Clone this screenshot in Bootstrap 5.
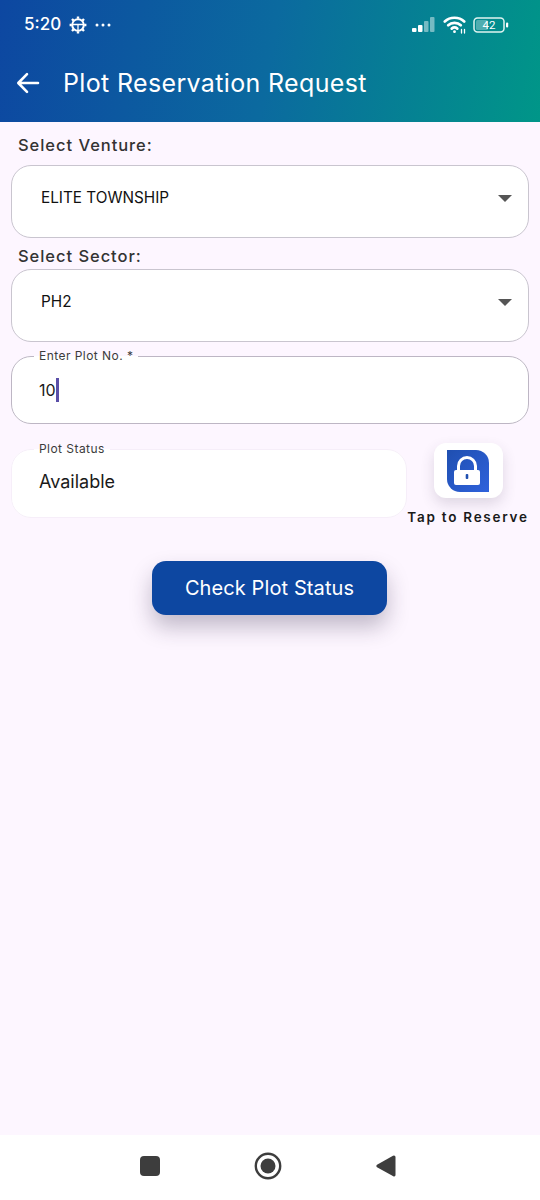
<!DOCTYPE html>
<html lang="en">
<head>
  <meta charset="UTF-8" />
  <meta name="viewport" content="width=device-width, initial-scale=1.0"/>
  <title>Plot Reservation Request</title>
  <link rel="stylesheet" href="https://cdn.jsdelivr.net/npm/bootstrap@5.3.2/dist/css/bootstrap.min.css"/>
  <style>
    body {
      background-color: #fdf6ff;
      font-family: Inter, "Open Sans", sans-serif;
      color: #1a1a1a;
      height: 1200px;
      width: 540px;
      overflow: hidden;
    }
    .app-screen { height: 1200px; }
    .app-header {
      height: 122px;
      background: linear-gradient(100deg, #0d47a1 0%, #0b6a9f 50%, #009688 100%);
      color: #fff;
    }
    .status-row { height: 49px; padding: 0 31px 0 24px; }
    .status-time { font-size: 17px; font-weight: 500; }
    .status-icons { gap: 6px; }
    .title-row { height: 48px; padding-left: 16px; gap: 23px; margin-top: 10px; }
    .title-text { font-size: 25px; letter-spacing: .35px; line-height: 1; margin: 0; font-weight: 400; }
    .form-area { padding: 0 11px; }
    .field-label { font-size: 16.5px; font-weight: 500; letter-spacing: .95px; color: #333; margin: 0 0 0 7px; line-height: 20px; }
    .pick-first { margin-top: 13px; margin-bottom: 10px; }
    .pick-next { margin-top: 8px; margin-bottom: 3px; }
    .pick-box {
      height: 73px; background: #fff; border: 1px solid #c9c5cf; border-radius: 20px;
      padding: 0 16px 6px 29px; font-size: 15.3px; color: #111;
    }
    .pick-arrow { width: 0; height: 0; border-left: 7.5px solid transparent; border-right: 7.5px solid transparent; border-top: 7.5px solid #555; }
    .notch-box { background: #fff; border: 1px solid #bdb6c4; border-radius: 20px; height: 74px; margin: 0; padding: 0 27px; }
    .notch-box legend { float: none; width: auto; font-size: 12px; font-weight: 400; color: #3c3c3c; padding: 0 5px; margin: 0 0 0 -5px; line-height: 1; letter-spacing: .45px; }
    .notch-value { font-size: 16px; line-height: 24px; margin-top: 16px; }
    .type-caret { display: inline-block; width: 3px; height: 24px; background: #5a4fa8; vertical-align: top; }
    .plot-field { margin-top: 8px; }
    .status-line { margin-top: 19px; }
    .status-box { border-color: #f6eef9; width: 396px; height: 75px; flex: none; }
    .status-box .notch-value { font-size: 18px; margin-top: 15px; }
    .reserve-col { width: 122px; }
    .reserve-tile {
      width: 69px; height: 55px; background: #fff; border-radius: 12px;
      box-shadow: 0 6px 14px rgba(60, 50, 80, .16);
    }
    .reserve-text { font-size: 13.5px; font-weight: 600; letter-spacing: 1.75px; margin-top: 11px; line-height: 16px; white-space: nowrap; }
    .check-wrap { margin-top: 36px; padding-right: 1px; }
    .check-btn {
      width: 235px; height: 54px; background: #0d47a1; color: #fff; border: 0; border-radius: 14px;
      font-size: 20px; letter-spacing: .1px; box-shadow: 0 12px 22px rgba(40, 30, 60, .28);
    }
    .check-btn:hover { background: #0d47a1; color: #fff; }
    .bottom-bar { height: 65px; background: #fff; padding: 0 4px 4px 0; }
    .bar-slot { width: 118px; }
  </style>
</head>
<body>
  <div class="app-screen d-flex flex-column">
    <header class="app-header">
      <div class="status-row d-flex align-items-center justify-content-between">
        <div class="d-flex align-items-center gap-2">
          <span class="status-time">5:20</span>
          <svg width="18" height="18" viewBox="0 0 18 18" fill="none" stroke="#fff">
            <circle cx="9" cy="9" r="5.800" stroke-width="2"/>
            <path d="M3.600 8.500h10.800M9 8.500v5.500" stroke-width="1.300"/>
            <path d="M9 .6v2.200M9 15.200v2.200M.6 9h2.200M15.200 9h2.200M3 3l1.600 1.600M13.400 13.400L15 15M15 3l-1.600 1.600M4.600 13.400L3 15" stroke-width="2.400"/>
          </svg>
          <svg width="16" height="4" viewBox="0 0 16 4" fill="#fff">
            <circle cx="2" cy="2" r="1.500"/><circle cx="8" cy="2" r="1.500"/><circle cx="14" cy="2" r="1.500"/>
          </svg>
        </div>
        <div class="status-icons d-flex align-items-center">
          <svg width="25" height="17" viewBox="0 0 25 17">
            <rect x="0" y="12" width="4.500" height="4" rx="1" fill="#fff"/>
            <rect x="6" y="9" width="4.500" height="7" rx="1" fill="#fff"/>
            <rect x="12" y="5" width="4.500" height="11" rx="1" fill="#fff" fill-opacity=".45"/>
            <rect x="18" y="1" width="4.500" height="15" rx="1" fill="#fff" fill-opacity=".45"/>
          </svg>
          <svg width="24" height="19" viewBox="0 0 24 19" fill="none" stroke="#fff" stroke-width="2.700" stroke-linecap="round">
            <path d="M1.800 6.500C7 1.500 16 1.500 21.200 6.500"/>
            <path d="M5.200 10.200C8.500 7 14.500 7 17.800 10.200"/>
            <path d="M8.700 13.600C10.300 12.300 12.700 12.300 14.300 13.600"/>
            <circle cx="11.500" cy="16.700" r=".8" fill="#fff" stroke-width="1.200"/>
            <path d="M18.500 14.500v3.500M21.500 14.500v3.500" stroke-width="1.300"/>
          </svg>
          <svg width="36" height="16" viewBox="0 0 36 16">
            <rect x="1" y="1" width="30" height="14" rx="3.500" fill="none" stroke="#dff3f0" stroke-width="1.500"/>
            <rect x="3" y="3" width="12" height="10" rx="1.500" fill="#fff" fill-opacity=".3"/>
            <rect x="33" y="5.500" width="2.200" height="5" rx="1" fill="#fff"/>
            <text x="16" y="12" text-anchor="middle" font-family="Roboto, sans-serif" font-size="11.500" fill="#fff">42</text>
          </svg>
        </div>
      </div>
      <div class="title-row d-flex align-items-center">
        <svg width="24" height="22" viewBox="0 0 24 22" fill="none" stroke="#fff" stroke-width="2.600" stroke-linecap="round" stroke-linejoin="round">
          <path d="M22 11H2.500M11 2.200 2.300 11l8.700 8.800"/>
        </svg>
        <h1 class="title-text">Plot Reservation Request</h1>
      </div>
    </header>

    <main class="form-area flex-grow-1">
      <p class="field-label pick-first">Select Venture:</p>
      <div class="pick-box d-flex align-items-center justify-content-between">
        <span>ELITE TOWNSHIP</span><span class="pick-arrow"></span>
      </div>
      <p class="field-label pick-next">Select Sector:</p>
      <div class="pick-box d-flex align-items-center justify-content-between">
        <span>PH2</span><span class="pick-arrow"></span>
      </div>
      <fieldset class="notch-box plot-field">
        <legend>Enter Plot No. *</legend>
        <div class="notch-value">10<span class="type-caret"></span></div>
      </fieldset>
      <div class="status-line d-flex justify-content-between">
        <fieldset class="notch-box status-box">
          <legend>Plot Status</legend>
          <div class="notch-value">Available</div>
        </fieldset>
        <div class="reserve-col d-flex flex-column align-items-center">
          <div class="reserve-tile d-flex align-items-center justify-content-center">
            <svg width="42" height="42" viewBox="0 0 42 42">
              <defs>
                <linearGradient id="lockFill" x1="0" y1="0" x2="1" y2="1">
                  <stop offset="0" stop-color="#1f4fb0"/><stop offset="1" stop-color="#2f62dc"/>
                </linearGradient>
              </defs>
              <path d="M0 0H29A13 13 0 0 1 42 13V42H13A13 13 0 0 1 0 29Z" fill="url(#lockFill)"/>
              <path d="M11.500 21v-5a8.500 8.500 0 0 1 17 0v5" fill="none" stroke="#fff" stroke-width="3"/>
              <rect x="7" y="20" width="26" height="15" rx="2" fill="#fff"/>
              <rect x="18.700" y="24" width="2.600" height="5" rx="1" fill="#1f4fb0"/>
            </svg>
          </div>
          <div class="reserve-text">Tap to Reserve</div>
        </div>
      </div>
      <div class="check-wrap d-flex justify-content-center">
        <button type="button" class="btn check-btn">Check Plot Status</button>
      </div>
    </main>

    <nav class="bottom-bar d-flex align-items-center justify-content-center">
      <div class="bar-slot d-flex justify-content-center">
        <svg width="22" height="22" viewBox="0 0 22 22"><rect x="1" y="1" width="20" height="20" rx="4" fill="#3d3d3d"/></svg>
      </div>
      <div class="bar-slot d-flex justify-content-center">
        <svg width="28" height="28" viewBox="0 0 28 28"><circle cx="14" cy="14" r="12.200" fill="none" stroke="#3d3d3d" stroke-width="2.400"/><circle cx="14" cy="14" r="7.500" fill="#3d3d3d"/></svg>
      </div>
      <div class="bar-slot d-flex justify-content-center">
        <svg width="22" height="24" viewBox="0 0 22 24"><path d="M19 1.500a1.500 1.500 0 0 1 1.500 1.500v18a1.500 1.500 0 0 1-2.200 1.300L2 13.200a1.500 1.500 0 0 1 0-2.400L18 1.700z" fill="#3d3d3d"/></svg>
      </div>
    </nav>
  </div>
</body>
</html>
